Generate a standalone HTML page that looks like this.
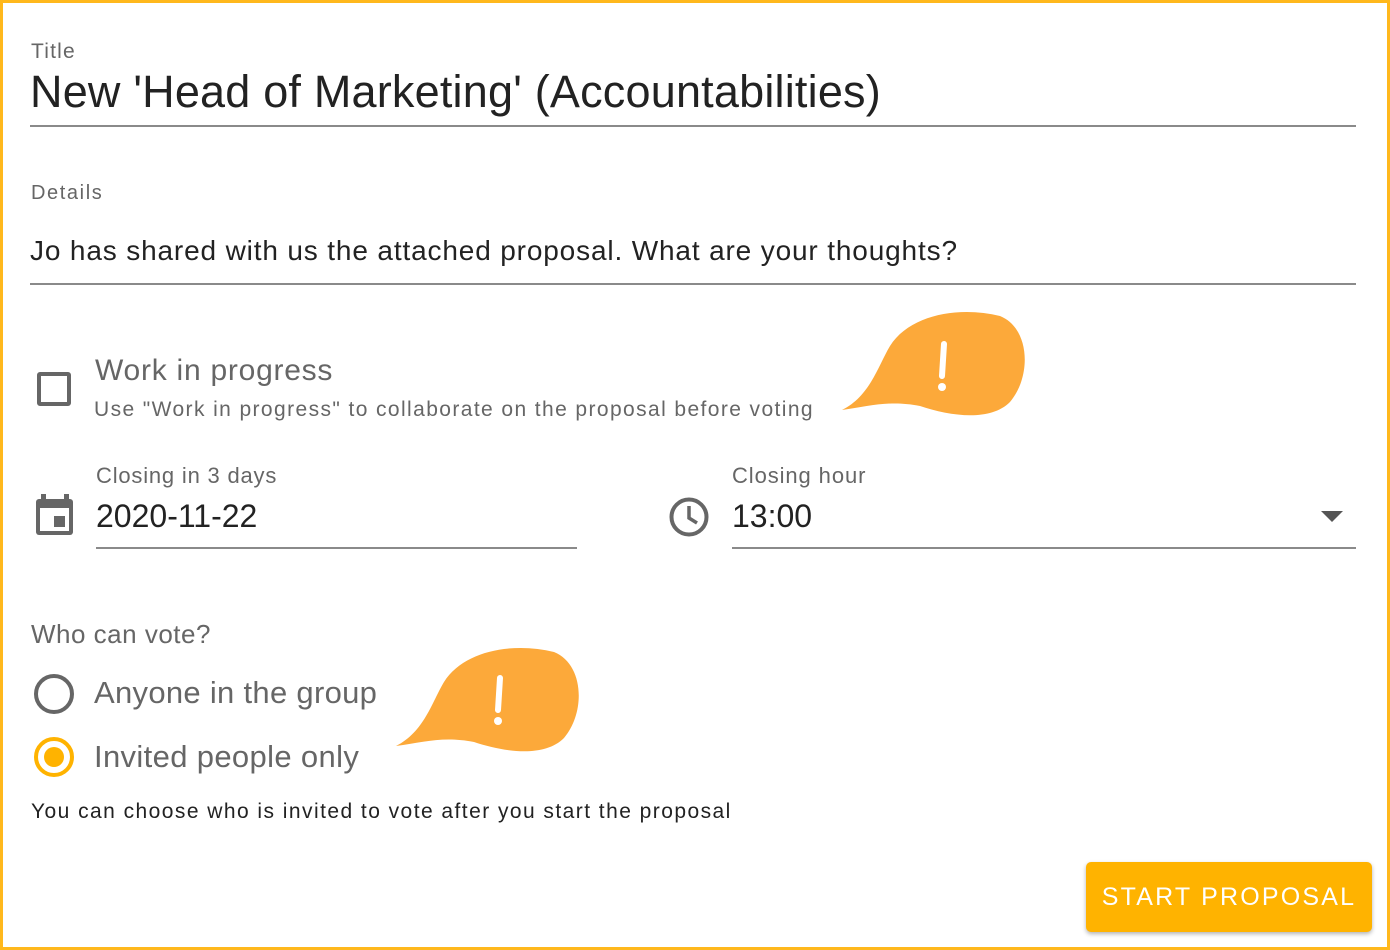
<!DOCTYPE html>
<html><head><style>
*{margin:0;padding:0;box-sizing:border-box}
html,body{width:1390px;height:950px;overflow:hidden;background:#fff}
body{font-family:"Liberation Sans",sans-serif;position:relative}
.frame{position:absolute;left:0;top:0;width:1390px;height:950px;border:3px solid #ffb81c}
.a{position:absolute;white-space:nowrap}
.line{position:absolute;height:2px;background:#8a8a8a}
</style></head><body>
<div class="frame"></div>
<div class="a" style="left:31px;top:40px;font-size:21px;color:#666;letter-spacing:1.2px">Title</div>
<div class="a" style="left:30px;top:66px;font-size:45px;color:#222;letter-spacing:0.2px">New 'Head of Marketing' (Accountabilities)</div>
<div class="line" style="left:30px;top:125px;width:1326px"></div>
<div class="a" style="left:31px;top:182px;font-size:20px;color:#666;letter-spacing:1.6px">Details</div>
<div class="a" style="left:30px;top:235px;font-size:28px;color:#222;letter-spacing:0.85px">Jo has shared with us the attached proposal. What are your thoughts?</div>
<div class="line" style="left:30px;top:283px;width:1326px"></div>
<div style="position:absolute;left:37px;top:372px;width:34px;height:34px;border:4px solid #666;border-radius:3px"></div>
<div class="a" style="left:95px;top:354px;font-size:30px;color:#666;letter-spacing:0.75px">Work in progress</div>
<div class="a" style="left:94px;top:398px;font-size:21px;color:#666;letter-spacing:1.4px">Use "Work in progress" to collaborate on the proposal before voting</div>
<svg class="a" style="left:840px;top:306px" width="190" height="116" viewBox="0 0 190 116"><path d="M2 104 C30 90 38 60 50 40 C70 8 120 0 160 10 C190 22 192 70 170 96 C150 116 110 110 80 100 C50 94 30 100 2 104Z" fill="#fca93a"/><path d="M104 38 L102 70" stroke="#fff" stroke-width="6" stroke-linecap="round"/><circle cx="102" cy="81" r="4" fill="#fff"/></svg>
<div class="a" style="left:96px;top:463px;font-size:22px;color:#666;letter-spacing:0.8px">Closing in 3 days</div>
<svg class="a" style="left:36px;top:494px" width="38" height="42" viewBox="0 0 38 42"><rect x="5" y="0" width="5" height="8" fill="#666"/><rect x="28" y="0" width="5" height="8" fill="#666"/><rect x="0" y="5" width="37" height="36" rx="3" fill="#666"/><rect x="4" y="14" width="29" height="23" fill="#fff"/><rect x="18" y="22" width="11" height="11" fill="#666"/></svg>
<div class="a" style="left:96px;top:498px;font-size:32px;color:#222">2020-11-22</div>
<div class="line" style="left:96px;top:547px;width:481px"></div>
<svg class="a" style="left:668px;top:496px" width="42" height="42" viewBox="0 0 42 42"><circle cx="21" cy="21" r="17.5" fill="none" stroke="#666" stroke-width="4"/><path d="M21 10 V22 L29 27" fill="none" stroke="#666" stroke-width="3.5"/></svg>
<div class="a" style="left:732px;top:463px;font-size:22px;color:#666;letter-spacing:0.9px">Closing hour</div>
<div class="a" style="left:732px;top:498px;font-size:32px;color:#222">13:00</div>
<svg class="a" style="left:1321px;top:511px" width="22" height="12"><path d="M0 0 H22 L11 11Z" fill="#555"/></svg>
<div class="line" style="left:732px;top:547px;width:624px"></div>
<div class="a" style="left:31px;top:619px;font-size:26px;color:#666;letter-spacing:0.5px">Who can vote?</div>
<div style="position:absolute;left:34px;top:674px;width:40px;height:40px;border:4px solid #666;border-radius:50%"></div>
<div class="a" style="left:94px;top:675px;font-size:31px;color:#666;letter-spacing:0.3px">Anyone in the group</div>
<div style="position:absolute;left:34px;top:737px;width:40px;height:40px;border:4px solid #ffb300;border-radius:50%"></div>
<div style="position:absolute;left:44px;top:747px;width:20px;height:20px;background:#ffb300;border-radius:50%"></div>
<div class="a" style="left:94px;top:739px;font-size:31px;color:#666;letter-spacing:0.35px">Invited people only</div>
<svg class="a" style="left:394px;top:642px" width="190" height="116" viewBox="0 0 190 116"><path d="M2 104 C30 90 38 60 50 40 C70 8 120 0 160 10 C190 22 192 70 170 96 C150 116 110 110 80 100 C50 94 30 100 2 104Z" fill="#fca93a"/><path d="M106 36 L104 68" stroke="#fff" stroke-width="6" stroke-linecap="round"/><circle cx="104" cy="79" r="4" fill="#fff"/></svg>
<div class="a" style="left:31px;top:800px;font-size:21px;color:#222;letter-spacing:1.45px">You can choose who is invited to vote after you start the proposal</div>
<div style="position:absolute;left:1086px;top:862px;width:286px;height:70px;background:#ffb300;border-radius:5px;box-shadow:0 2px 4px rgba(0,0,0,.3);color:#fff;font-size:25px;letter-spacing:2.2px;text-align:center;line-height:70px">START PROPOSAL</div>
</body></html>
